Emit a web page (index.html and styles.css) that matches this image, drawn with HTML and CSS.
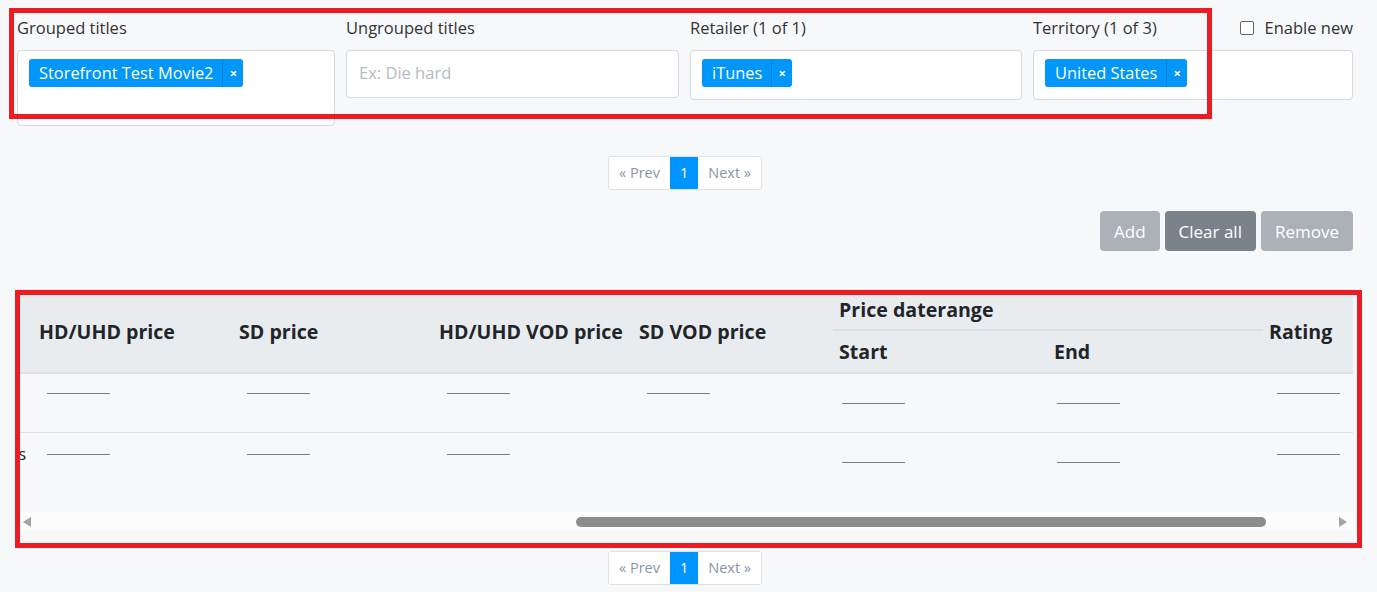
FILE: index.html
```html
<!DOCTYPE html>
<html lang="en">
<head>
<meta charset="utf-8">
<title>Prices</title>
<link rel="stylesheet" href="styles.css">
</head>
<body>
<div class="page">
  <div class="filters">
    <div class="field">
      <div class="label">Grouped titles</div>
      <div class="box box-tall">
        <span class="tag"><span class="tag-text">Storefront Test Movie2</span><span class="tag-x">×</span></span>
      </div>
    </div>
    <div class="field">
      <div class="label">Ungrouped titles</div>
      <div class="box"><span class="placeholder">Ex: Die hard</span></div>
    </div>
    <div class="field">
      <div class="label">Retailer (1 of 1)</div>
      <div class="box box-tag">
        <span class="tag"><span class="tag-text">iTunes</span><span class="tag-x">×</span></span>
      </div>
    </div>
    <div class="field">
      <div class="label label-row">
        <span>Territory (1 of 3)</span>
        <label class="check"><span class="checkbox"></span>Enable new</label>
      </div>
      <div class="box box-tag">
        <span class="tag"><span class="tag-text">United States</span><span class="tag-x">×</span></span>
      </div>
    </div>
  </div>

  <nav class="pager pager-top">
    <div class="pager-inner">
      <span class="pg">« Prev</span><span class="pg pg-active">1</span><span class="pg">Next »</span>
    </div>
  </nav>

  <div class="actions">
    <button class="btn btn-light">Add</button>
    <button class="btn btn-dark">Clear all</button>
    <button class="btn btn-light">Remove</button>
  </div>

  <div class="table-wrap">
    <div class="table-clip">
      <table class="grid">
        <colgroup>
          <col class="c200"><col class="c200"><col class="c200"><col class="c200"><col class="c200">
          <col class="c215"><col class="c215"><col class="c200">
        </colgroup>
        <thead>
          <tr class="h1">
            <th rowspan="2"></th>
            <th rowspan="2">HD/UHD price</th>
            <th rowspan="2">SD price</th>
            <th rowspan="2">HD/UHD VOD price</th>
            <th rowspan="2">SD VOD price</th>
            <th colspan="2" class="group">Price daterange</th>
            <th rowspan="2">Rating</th>
          </tr>
          <tr class="h2">
            <th>Start</th>
            <th>End</th>
          </tr>
        </thead>
        <tbody>
          <tr class="r1">
            <td class="name"></td>
            <td><span class="dash"></span></td>
            <td><span class="dash"></span></td>
            <td><span class="dash"></span></td>
            <td><span class="dash"></span></td>
            <td class="date"><span class="dash"></span></td>
            <td class="date"><span class="dash"></span></td>
            <td class="rating"><span class="dash"></span></td>
          </tr>
          <tr class="r2">
            <td class="name">Storefront Test Movies</td>
            <td><span class="dash"></span></td>
            <td><span class="dash"></span></td>
            <td><span class="dash"></span></td>
            <td></td>
            <td class="date"><span class="dash"></span></td>
            <td class="date"><span class="dash"></span></td>
            <td class="rating"><span class="dash"></span></td>
          </tr>
        </tbody>
      </table>
    </div>
    <div class="hscroll">
      <span class="arrow arrow-left"></span>
      <div class="track"><div class="thumb"></div></div>
      <span class="arrow arrow-right"></span>
    </div>
  </div>

  <nav class="pager pager-bottom">
    <div class="pager-inner">
      <span class="pg">« Prev</span><span class="pg pg-active">1</span><span class="pg">Next »</span>
    </div>
  </nav>
</div>

<div class="mark mark-top"></div>
<div class="mark mark-table"></div>
</body>
</html>
```

FILE: styles.css
```css
html, body {
  margin: 0;
  background: #f7f8fa;
}
body {
  font-family: "Open Sans", "Noto Sans", sans-serif;
  color: #212529;
}
.page {
  padding: 16px 24px 0 17px;
}

/* filters */
.filters {
  display: grid;
  grid-template-columns: 318px 333px 332px 320px;
  column-gap: 11px;
  align-items: start;
}
.label {
  font-size: 16.5px;
  line-height: 24px;
  height: 24px;
  margin-bottom: 10px;
  color: #333;
  white-space: nowrap;
}
.label-row {
  display: flex;
  justify-content: space-between;
}
.check {
  display: flex;
  align-items: center;
  gap: 11px;
}
.checkbox {
  width: 12px;
  height: 12px;
  border: 1px solid #666;
  border-radius: 2px;
  background: #fff;
}
.box {
  box-sizing: border-box;
  height: 48px;
  background: #fff;
  border: 1px solid #d5d9de;
  border-radius: 4px;
  padding: 8px 11px;
}
.box-tall { height: 76px; }
.box-tag { height: 50px; }
.placeholder {
  display: block;
  line-height: 28px;
  padding-left: 1px;
  color: #b6bcc2;
  font-size: 16.5px;
}
.tag {
  display: inline-flex;
  height: 28px;
  background: #0096fa;
  border-radius: 3px;
  color: #fff;
  font-size: 16.4px;
}
.tag-text {
  line-height: 28px;
  padding: 0 9px 0 10px;
  white-space: nowrap;
}
.tag-x {
  width: 20px;
  border-left: 1px solid rgba(0, 0, 0, 0.12);
  display: flex;
  align-items: center;
  justify-content: center;
  font-size: 13px;
  font-weight: 700;
}

/* pager */
.pager {
  display: flex;
  justify-content: center;
}
.pager-top { margin-top: 30px; }
.pager-bottom { margin-top: 20px; }
.pager-inner {
  display: flex;
  background: #fff;
  border: 1px solid #dee2e6;
  border-radius: 3px;
  overflow: hidden;
}
.pg {
  height: 32px;
  line-height: 32px;
  padding: 0 10px;
  font-size: 14.5px;
  color: #8a96a3;
}
.pg-active {
  background: #0094ff;
  color: #fff;
}

/* actions */
.actions {
  display: flex;
  justify-content: flex-end;
  gap: 5px;
  margin-top: 21px;
}
.btn {
  height: 40px;
  padding: 0 14px;
  border: 0;
  border-radius: 4px;
  color: #fff;
  font-family: inherit;
  font-size: 17px;
}
.btn-light { background: #abb1b7; }
.btn-dark { background: #79828b; }

/* table */
.table-wrap {
  margin-top: 38px;
}
.table-clip {
  overflow: hidden;
  border-top: 1px solid #dee2e6;
}
.grid {
  border-collapse: collapse;
  table-layout: fixed;
  width: 1630px;
  margin-left: -184px;
}
.c200 { width: 200px; }
.c215 { width: 215px; }
.grid thead {
  background: #e9ecef;
}
.grid th {
  text-align: left;
  padding: 0 6px;
  font-size: 19.6px;
  font-weight: 700;
  white-space: nowrap;
  vertical-align: middle;
  color: #212529;
  border-bottom: 2px solid #dee2e6;
}
.h1 { height: 40px; }
.h2 { height: 43px; }
.grid th.group {
  border-bottom: 2px solid #dde0e4;
}
.grid td {
  vertical-align: top;
  padding: 19px 6px 0 14px;
  font-size: 16px;
}
.grid td.date {
  padding-top: 29px;
  padding-left: 9px;
}
.r1 { height: 59px; border-bottom: 1px solid #dee2e6; }
.r2 { height: 80px; }
.r2 td { padding-top: 21px; }
.r2 td.date { padding-top: 29px; }
.grid td.name {
  text-align: right;
  padding: 10px 7px 0 6px;
  white-space: nowrap;
  overflow: hidden;
}
.dash {
  display: inline-block;
  width: 63px;
  height: 0;
  border-top: 1px solid #7a7f85;
  vertical-align: top;
}

/* fake horizontal scrollbar */
.hscroll {
  display: flex;
  align-items: center;
  height: 19px;
  padding: 0 6px;
  background: #fcfcfd;
}
.arrow {
  width: 0;
  height: 0;
  border-top: 5px solid transparent;
  border-bottom: 5px solid transparent;
}
.arrow-left {
  border-right: 8px solid #a3a3a3;
}
.arrow-right {
  border-left: 8px solid #a3a3a3;
}
.track {
  flex: 1;
  height: 10px;
  margin: 0 0 0 1px;
}
.thumb {
  margin-left: 544px;
  width: 690px;
  height: 10px;
  border-radius: 5px;
  background: #8c8c8c;
}

/* annotation marks */
.mark {
  position: absolute;
  box-sizing: border-box;
  border: 5px solid #ed1c24;
  pointer-events: none;
}
.mark-top {
  left: 9px;
  top: 8px;
  width: 1203px;
  height: 111px;
}
.mark-table {
  left: 15px;
  top: 290px;
  width: 1347px;
  height: 258px;
}
```
